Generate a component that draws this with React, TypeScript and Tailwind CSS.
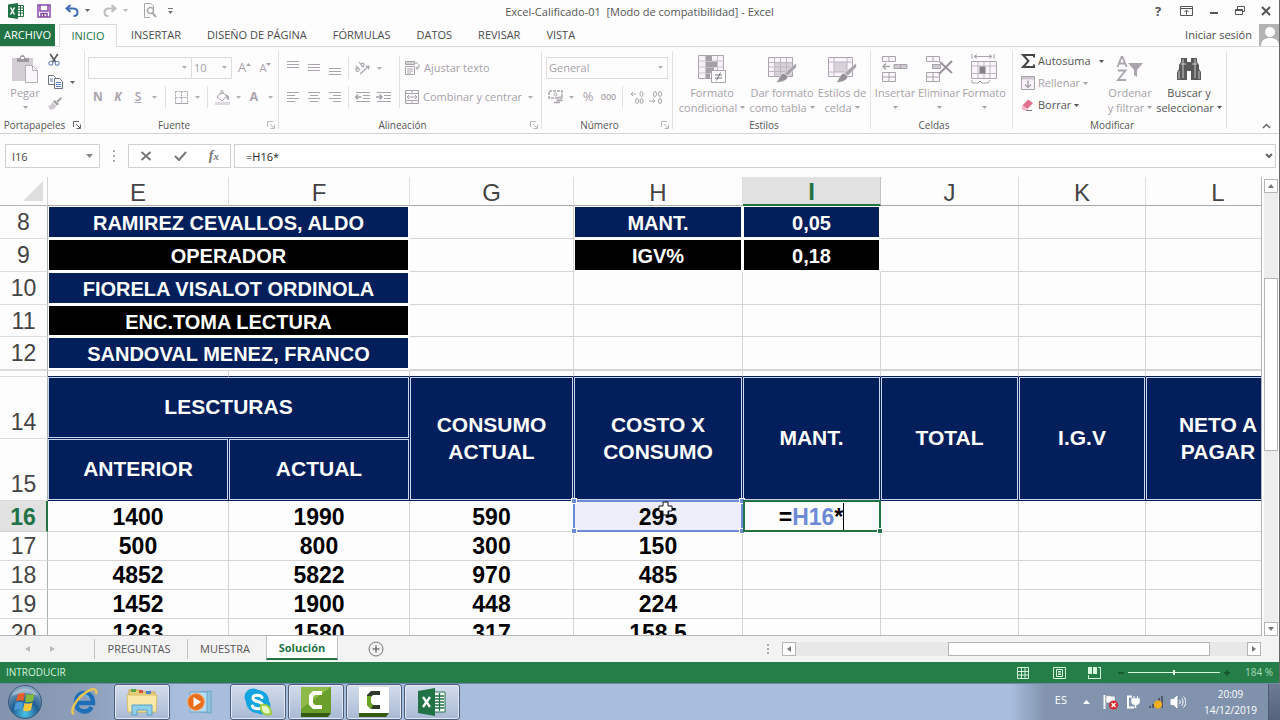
import React from "react";
import clsx from "clsx";

type IconProps = { className?: string };

const GRAY = "#a9a4ab";
const FILL = "#eae4ec";

const TABS = ["INSERTAR", "DISEÑO DE PÁGINA", "FÓRMULAS", "DATOS", "REVISAR", "VISTA"];

const COLUMNS = [
  { id: "E", width: "w-[181px]" },
  { id: "F", width: "w-[181px]" },
  { id: "G", width: "w-[164px]" },
  { id: "H", width: "w-[169px]" },
  { id: "I", width: "w-[138px]" },
  { id: "J", width: "w-[138px]" },
  { id: "K", width: "w-[127px]" },
  { id: "L", width: "w-[145px]" },
];

const STAFF_ROWS = [
  { n: 8, h: "h-[33px]", name: "RAMIREZ CEVALLOS, ALDO", dark: false, label: "MANT.", value: "0,05" },
  { n: 9, h: "h-[33px]", name: "OPERADOR", dark: true, label: "IGV%", value: "0,18" },
  { n: 10, h: "h-[33px]", name: "FIORELA VISALOT ORDINOLA", dark: false },
  { n: 11, h: "h-[32px]", name: "ENC.TOMA LECTURA", dark: true },
  { n: 12, h: "h-[33px]", name: "SANDOVAL MENEZ, FRANCO", dark: false },
];

const READINGS = [
  { n: 17, values: ["500", "800", "300", "150"] },
  { n: 18, values: ["4852", "5822", "970", "485"] },
  { n: 19, values: ["1452", "1900", "448", "224"] },
  { n: 20, values: ["1263", "1580", "317", "158,5"] },
];

/* ---------- small shared pieces ---------- */

function Caret({ className }: IconProps) {
  return (
    <svg viewBox="0 0 5 3" className={clsx("h-[3px] w-[5px] shrink-0 fill-current", className)}>
      <path d="M0 0h5L2.5 3z" />
    </svg>
  );
}

function CaretButton({ label, className }: { label: string; className?: string }) {
  return (
    <button aria-label={label} className={clsx("flex h-[22px] w-3 items-center justify-center text-[#b5b0b7]", className)}>
      <Caret />
    </button>
  );
}

function Tool({ label, className, children }: { label: string; className?: string; children: React.ReactNode }) {
  return (
    <button aria-label={label} className={clsx("flex h-[22px] shrink-0 items-center justify-center text-[#a9a4ab]", className)}>
      {children}
    </button>
  );
}

function Divider({ className }: IconProps) {
  return <div className={clsx("w-px shrink-0 bg-[#e0e0e0]", className)} />;
}

function Group({ title, className, launcher, active, children }: {
  title: string;
  className: string;
  launcher?: boolean;
  active?: boolean;
  children: React.ReactNode;
}) {
  return (
    <section className={clsx("relative flex shrink-0 flex-col", className)}>
      <div className="flex flex-1">{children}</div>
      <h2 className="flex h-4 items-center justify-center pr-4 text-[10px] text-[#555]">{title}</h2>
      {launcher && (
        <button aria-label={`Opciones de ${title}`} className={clsx("absolute right-1 bottom-1", active ? "text-[#666]" : "text-[#b9b9b9]")}>
          <svg viewBox="0 0 8 8" className="h-2 w-2" fill="none" stroke="currentColor">
            <path d="M.5 6V.5H6M3 3l4 4M7.5 3.5v4h-4" />
          </svg>
        </button>
      )}
      <div className="absolute top-1 right-0 bottom-1 w-px bg-[#e1e1e1]" />
    </section>
  );
}

function BigButton({ lines, icon, className, caretBelow, active }: {
  lines: string[];
  icon: React.ReactNode;
  className: string;
  caretBelow?: boolean;
  active?: boolean;
}) {
  return (
    <button className={clsx("flex flex-col items-center pt-[6px] text-[11px] leading-[15px] whitespace-nowrap", active ? "text-[#555]" : "text-[#a5a1a7]", className)}>
      <span className="flex h-8 items-center justify-center">{icon}</span>
      <span>{lines[0]}</span>
      {lines[1] && (
        <span className="flex items-center gap-[3px]">
          {lines[1]}
          <Caret />
        </span>
      )}
      {caretBelow && <Caret className="mt-[6px]" />}
    </button>
  );
}

function Combo({ label, value, className }: { label: string; value: string; className: string }) {
  return (
    <div className={clsx("relative h-[22px] border border-[#dcdcdc]", className)}>
      <select aria-label={label} defaultValue={value} className="block h-full w-full appearance-none bg-transparent pl-[2px] text-[11px] leading-[20px] text-[#a5a1a7] outline-none">
        <option>{value}</option>
      </select>
      <Caret className="pointer-events-none absolute top-2 right-1 text-[#b5b0b7]" />
    </div>
  );
}

/* ---------- ribbon icons ---------- */

function Lines({ rows, className }: { rows: [number, number, number][]; className?: string }) {
  return (
    <svg viewBox="0 0 14 16" className={clsx("h-4 w-[14px]", className)} stroke={GRAY} fill="none">
      {rows.map(([y, x1, x2]) => (
        <path key={y} d={`M${x1} ${y}H${x2}`} />
      ))}
    </svg>
  );
}

function ExcelMini() {
  return (
    <svg viewBox="0 0 16 16" className="h-4 w-4">
      <path d="M9 2.500h6.500v11H9z" fill="#fff" stroke="#217346" />
      <path d="M10 5h5M10 7.500h5M10 10h5M12.500 3v10" stroke="#217346" />
      <path d="M0 1.500L10 0v16L0 14.500z" fill="#217346" />
      <path d="M2.500 4.500l4 7M6.500 4.500l-4 7" stroke="#fff" strokeWidth="1.500" />
    </svg>
  );
}

function SaveIcon() {
  return (
    <svg viewBox="0 0 14 14" className="h-[14px] w-[14px]" fill="none" stroke="#8648a8" strokeWidth="1.500">
      <path d="M1 1h12v12H1zM3 1v6h8V1M4 13V9.500h6V13" />
      <path d="M6 10h1.500v3H6z" fill="#8648a8" stroke="none" />
    </svg>
  );
}

function UndoIcon({ flip, color }: { flip?: boolean; color: string }) {
  return (
    <svg viewBox="0 0 14 13" className={clsx("h-[13px] w-[14px]", flip && "-scale-x-100")} fill="none" stroke={color} strokeWidth="2">
      <path d="M5.500 1L1.500 4.500l4 3.500M2 4.500h6c3 0 4.500 1.500 4.500 4 0 2-1.500 3.500-4 3.500" />
    </svg>
  );
}

function PreviewIcon() {
  return (
    <svg viewBox="0 0 14 15" className="h-[15px] w-[14px]" fill="none" stroke="#aaa">
      <path d="M10.500 5V3L8 .5H1.500v14H7" />
      <circle cx="7.500" cy="7.500" r="3" strokeWidth="1.500" />
      <path d="M9.500 10l3.500 4" strokeWidth="2" />
    </svg>
  );
}

function PasteIcon() {
  return (
    <svg viewBox="0 0 28 30" className="h-[30px] w-7">
      <path d="M1 4h21v23H1z" fill="#d2ced3" />
      <path d="M6 4h3c0-4 5-4 5 0h4v4H6z" fill="#9c989e" />
      <path d="M10 3h3v2h-3z" fill="#fff" />
      <path d="M14.500 11.500h7l5 5v12h-12z" fill="#faf6fb" stroke="#b4b0b6" />
      <path d="M21.500 11.500v5h5" fill="none" stroke="#b4b0b6" />
    </svg>
  );
}

function CutIcon() {
  return (
    <svg viewBox="0 0 14 14" className="h-[14px] w-[14px]" fill="none">
      <path d="M2.500 0L9 9.500M11.500 0L5 9.500" stroke="#5c5c5c" strokeWidth="2" />
      <circle cx="3.300" cy="10.800" r="2.300" stroke="#6d84bd" strokeWidth="1.300" />
      <circle cx="10.700" cy="10.800" r="2.300" stroke="#6d84bd" strokeWidth="1.300" />
    </svg>
  );
}

function CopyIcon() {
  return (
    <svg viewBox="0 0 15 14" className="h-[14px] w-[15px]" fill="#fff" stroke="#6a7080">
      <path d="M.5.5h5l2 2v7h-7z" />
      <path d="M2 4h3M2 6h3" stroke="#5b7ab8" />
      <path d="M6.500 3.500h5l3 3v7h-8z" />
      <path d="M8 7.500h5M8 9.500h5M8 11.500h5" stroke="#5b7ab8" />
    </svg>
  );
}

function BrushIcon() {
  return (
    <svg viewBox="0 0 14 13" className="h-[13px] w-[14px]">
      <path d="M13 0l1 1.500-4 4L8.500 4z" fill="#a29ea4" />
      <path d="M7 3l4 4-2 1.500L5 4.500z" fill="#a29ea4" />
      <path d="M4.500 5l4 4c-2 3-5 4-6 4L0 9c2 0 3.500-2 4.500-4z" fill="#cdc9cf" />
    </svg>
  );
}

function BordersIcon() {
  return (
    <svg viewBox="0 0 13 13" className="h-[13px] w-[13px]" fill="none" stroke={GRAY}>
      <path d="M.5.5h12v12M.5.5v12M6.500.5v12M.5 6.500h12" strokeDasharray="2 1" />
      <path d="M0 12.500h13" />
    </svg>
  );
}

function BucketIcon() {
  return (
    <svg viewBox="0 0 15 15" className="h-[15px] w-[15px]" fill="none" stroke={GRAY}>
      <path d="M6.500 2L2 7l5 4 5-5zM6 5V1.500c0-1.500 2-1.500 2 0V4" />
      <path d="M11 5c2 0 3 2 2.500 5-1-1-1.500-2-2.500-5z" fill={GRAY} />
      <path d="M0 12h15v3H0z" fill="#ddd9de" stroke="none" />
    </svg>
  );
}

function OrientIcon() {
  return (
    <svg viewBox="0 0 16 14" className="h-[14px] w-4" fill="none" stroke={GRAY} strokeWidth="1.200">
      <path d="M5 13L14 5M14 5l-3.500.5M14 5l-.5 3.500" />
      <path d="M1 5l4 4M3.500 7.500c-2-1-3 0-2.500 1.500s2 2 3 .5" />
      <path d="M4 1l4 5M6 3.500c1-2 3-1.500 3 0s-1 2.500-2.500 2" />
    </svg>
  );
}

function WrapIcon() {
  return (
    <svg viewBox="0 0 15 14" className="h-[14px] w-[15px]" fill="none" stroke={GRAY}>
      <path d="M.5.5h9v3h-9zM0 2h13M.5 5.500h9v8h-9z" />
      <path d="M2 8h6M2 10h6M2 12h4M14 3v3.500l-3 1M12.500 5.500L11 7.500l2 1" />
    </svg>
  );
}

function MergeIcon() {
  return (
    <svg viewBox="0 0 14 14" className="h-[14px] w-[14px]" fill="none" stroke={GRAY}>
      <path d="M.5.5h13v13H.5zM.5 3.500h13M.5 10.500h13M7 0v3.500M7 10.500V14M2 7h10M4 5L2 7l2 2M10 5l2 2-2 2" />
    </svg>
  );
}

function IndentIcon({ right }: { right?: boolean }) {
  return (
    <svg viewBox="0 0 15 12" className="h-3 w-[15px]" fill="none" stroke={GRAY}>
      <path d="M1 1.500h14M8 4.500h7M8 7.500h7M1 10.500h14" />
      <path d={right ? "M0 6h6M3.500 3.500L6 6 3.500 8.500" : "M.5 6h6M3 3.500L.5 6 3 8.500"} strokeWidth="1.500" />
    </svg>
  );
}

function MoneyIcon() {
  return (
    <svg viewBox="0 0 16 14" className="h-[14px] w-4" fill="none" stroke={GRAY}>
      <path d="M1 1h13v7H1z" strokeDasharray="3 1" strokeWidth="1.500" />
      <circle cx="7.500" cy="4.500" r="1.500" />
      <ellipse cx="11.500" cy="8" rx="3" ry="1" fill={FILL} />
      <path d="M8.500 10.500h6M6 12.500h6" strokeWidth="1.500" />
    </svg>
  );
}

function DecimalIcon({ more }: { more?: boolean }) {
  return (
    <svg viewBox="0 0 14 13" className="h-[13px] w-[14px]" fill="none" stroke={GRAY}>
      {more ? (
        <>
          <path d="M1 3h5M3 1L1 3l2 2" />
          <ellipse cx="11.500" cy="3" rx="1.500" ry="2.500" />
          <ellipse cx="7" cy="10" rx="1.500" ry="2.500" />
          <ellipse cx="11.500" cy="10" rx="1.500" ry="2.500" />
        </>
      ) : (
        <>
          <ellipse cx="6" cy="3" rx="1.500" ry="2.500" />
          <ellipse cx="11" cy="3" rx="1.500" ry="2.500" />
          <path d="M0 10h6M4 8l2 2-2 2" />
          <ellipse cx="11" cy="10" rx="1.500" ry="2.500" />
        </>
      )}
    </svg>
  );
}

function CondFormatIcon() {
  return (
    <svg viewBox="0 0 28 28" className="h-7 w-7" stroke={GRAY}>
      <path d="M.5.5h25v23H.5z" fill="#f7f1f8" />
      <path d="M.5 6h25M.5 12h25M.5 18h25M7.500.5v23M19.500.5v23" fill="none" stroke="#c9c3cb" />
      <path d="M8 1h6v5H8zM8 6.500h11V12H8zM8 12.500h8V18H8zM8 18.500h4V24H8z" fill="#a59fa7" stroke="none" />
      <path d="M13.500 15.500h14v12h-14z" fill="#fff" />
      <path d="M17 20h7M17 23h7M22.500 17.500l-4 8" stroke="#77727a" />
    </svg>
  );
}

function TableFormatIcon({ cell }: { cell?: boolean }) {
  return (
    <svg viewBox="0 0 29 28" className="h-7 w-[29px]" stroke={GRAY}>
      <path d="M.5 2.500h24v19H.5z" fill="#faf5fb" />
      {cell ? <path d="M6 7h13v10H6z" fill="#d8d0da" stroke="none" /> : <path d="M7 8h17v13H7z" fill="#d8d0da" stroke="none" />}
      <path d={cell ? "M.5 7h24M.5 17h24M6 2.500v19M19 2.500v19" : "M.5 7.500h24M.5 12h24M.5 16.500h24M6.500 2.500v19M12.500 2.500v19M18.500 2.500v19"} fill="none" stroke="#bdb6bf" />
      <path d="M28 8l.5 4-9 9-3-3z" fill="#a8a3aa" stroke="#fff" strokeWidth=".500" />
      <path d="M16 18l4 3.500c-1 4-5 5.500-12 6 3-2 3-8 8-9.500z" fill="#979299" stroke="#fff" strokeWidth=".500" />
    </svg>
  );
}

function InsertIcon({ remove }: { remove?: boolean }) {
  return (
    <svg viewBox="0 0 28 28" className="h-7 w-7" fill="#faf6fb" stroke={GRAY}>
      <path d="M1.500 1.500h13v5h-13zM8 1.500v5" />
      <path d="M1.500 17.500h13v9h-13zM8 17.500v9M1.500 22h13" />
      {remove ? (
        <>
          <path d="M7.500 9.500h8v4h-8z" fill="#cfc9d1" />
          <path d="M15 7l12 11M27 6L14 19" strokeWidth="2" stroke="#99949b" />
        </>
      ) : (
        <>
          <path d="M13 9.500h13v4H13zM19.500 9.500v4" fill="#cfc9d1" />
          <path d="M2 11.500h7M5 8.500l-3 3 3 3" fill="none" strokeWidth="1.500" />
        </>
      )}
    </svg>
  );
}

function FormatCellsIcon() {
  return (
    <svg viewBox="0 0 28 30" className="h-[30px] w-7" fill="none" stroke={GRAY}>
      <path d="M2 0v5M24 0v5M4 2.500h18M7 .5l-3 2 3 2M19 .5l3 2-3 2" />
      <path d="M1.500 7.500h25v17h-25z" fill="#faf6fb" />
      <path d="M1.500 12h25M1.500 19.500h25M8 7.500v17M20 7.500v17M14 7.500v5M14 19v5" stroke="#bdb6bf" />
      <path d="M9.500 12.500h6v7h-6z" fill="#857f88" stroke="none" />
      <path d="M2 26v3h6l2-2 2 2h6l2-3" />
    </svg>
  );
}

function SortIcon() {
  return (
    <svg viewBox="0 0 28 28" className="h-7 w-7" fill="none" stroke={GRAY} strokeWidth="1.800">
      <path d="M1.500 12L5.500 2h1l4 10M3 8.500h6M2 15.500h7.500L2 25h8" />
      <path d="M12 8h15l-6 7v7l-3-2v-5z" fill={GRAY} stroke="none" />
    </svg>
  );
}

function BinocularsIcon() {
  return (
    <svg viewBox="0 0 26 26" className="h-[26px] w-[26px]">
      <path d="M5 2h6v4h4V2h6v4l2 3v4l2 3v8H15v-9h-4v9H1v-8l2-3V9l2-3z" fill="#595959" />
      <path d="M3 15v8M7 3v19M19 3v19M23 15v8M5 8h5M16 8h5" stroke="#e8e8e8" strokeWidth=".800" />
    </svg>
  );
}

function SigmaIcon() {
  return (
    <svg viewBox="0 0 14 14" className="h-[14px] w-[14px]" fill="none" stroke="#454545" strokeWidth="2">
      <path d="M13 3.500V1H2l5.500 6L2 13h11v-2.500" />
    </svg>
  );
}

function FillDownIcon() {
  return (
    <svg viewBox="0 0 14 14" className="h-[14px] w-[14px]" fill="none" stroke={GRAY}>
      <path d="M.5.5h13v13H.5z" fill="#f7f1f8" />
      <path d="M1 1h12v2.500H1z" fill="#cfc9d1" stroke="none" />
      <path d="M7 4.500v7M4 8.500l3 3 3-3" strokeWidth="1.500" />
    </svg>
  );
}

function EraserIcon() {
  return (
    <svg viewBox="0 0 14 12" className="h-3 w-[14px]">
      <path d="M7 .5L12 4 6.500 10 1.500 6.500z" fill="#e0708f" />
      <path d="M1.500 6.500l5 3.500-1 1.500H2L.5 9z" fill="#f3b9c8" />
      <path d="M5 11.500h6" stroke="#777" />
    </svg>
  );
}

/* ---------- window chrome ---------- */

function TitleBar() {
  return (
    <header className="relative flex h-6 shrink-0 items-center justify-between">
      <div className="flex items-center pb-[3px] pl-2 text-[#666]">
        <ExcelMini />
        <button aria-label="Guardar" className="ml-[13px]"><SaveIcon /></button>
        <button aria-label="Deshacer" className="ml-[14px]"><UndoIcon color="#3f6fb5" /></button>
        <Caret className="ml-[6px]" />
        <button aria-label="Rehacer" className="ml-[13px]"><UndoIcon flip color="#bdbdbd" /></button>
        <Caret className="ml-[6px] text-[#bbb]" />
        <button aria-label="Vista previa" className="ml-[15px]"><PreviewIcon /></button>
        <button aria-label="Personalizar barra" className="ml-[11px]">
          <svg viewBox="0 0 5 6" className="h-[6px] w-[5px]" fill="#777"><path d="M0 0h5v1H0zM0 3h5L2.500 6z" /></svg>
        </button>
      </div>
      <h1 className="pointer-events-none absolute inset-0 flex items-center justify-center text-[11px] whitespace-pre text-[#555]">
        Excel-Calificado-01  [Modo de compatibilidad] - Excel
      </h1>
      <div className="relative flex items-center gap-4 pr-2 pb-[3px] text-[#555]">
        <button aria-label="Ayuda" className="w-3 text-[13px] leading-4 font-bold">?</button>
        <button aria-label="Opciones de cinta">
          <svg viewBox="0 0 13 10" className="h-[10px] w-[13px]" fill="none" stroke="currentColor"><path d="M.5.5h12v9H.5zM.5 2.500h12M6.500 8.500V4.500M4.500 6l2-2 2 2" /></svg>
        </button>
        <button aria-label="Minimizar">
          <svg viewBox="0 0 10 10" className="h-[10px] w-[10px]" stroke="currentColor" strokeWidth="2"><path d="M1 7h8" /></svg>
        </button>
        <button aria-label="Restaurar">
          <svg viewBox="0 0 10 9" className="h-[9px] w-[10px]" fill="none" stroke="currentColor"><path d="M.5 3.500h7v5h-7zM2.500 3V.5h7v5H8M.5 4.500h7" /></svg>
        </button>
        <button aria-label="Cerrar">
          <svg viewBox="0 0 10 10" className="h-[10px] w-[10px]" stroke="currentColor" strokeWidth="2"><path d="M1 1l8 8M9 1L1 9" /></svg>
        </button>
      </div>
    </header>
  );
}

function TabStrip() {
  return (
    <nav className="flex h-[23px] shrink-0 items-stretch border-b border-[#d9d9d9] text-[11px] text-[#4b4b4b]">
      <button className="w-[55px] bg-[#217346] text-white">ARCHIVO</button>
      <button className="-mb-px ml-1 w-[58px] border border-b-0 border-[#d9d9d9] bg-[#fdfdfd] text-[#217346]">INICIO</button>
      <div className="ml-[14px] flex gap-[26px]">
        {TABS.map((tab) => (
          <button key={tab}>{tab}</button>
        ))}
      </div>
      <button className="ml-auto pr-[7px]">Iniciar sesión</button>
      <svg viewBox="0 0 20 22" className="h-[22px] w-5" aria-label="Cuenta">
        <path d="M0 0h20v22H0z" fill="#b3b3b3" />
        <circle cx="11" cy="8" r="5" fill="#fff" />
        <path d="M2 22c0-6 4-8 9-8s9 2 9 8z" fill="#fff" />
      </svg>
    </nav>
  );
}

function Ribbon() {
  return (
    <div className="relative flex h-[87px] shrink-0 border-b border-[#d5d5d5]">
      <Group title="Portapapeles" className="w-[85px]" launcher active>
        <BigButton lines={["Pegar"]} icon={<PasteIcon />} className="ml-[2px] w-[46px]" caretBelow />
        <div className="flex flex-col pt-[6px]">
          <button aria-label="Cortar" className="flex h-[14px] w-3"><CutIcon /></button>
          <div className="mt-2 flex items-center gap-[7px] text-[#666]">
            <button aria-label="Copiar"><CopyIcon /></button>
            <Caret />
          </div>
          <button aria-label="Copiar formato" className="mt-2"><BrushIcon /></button>
        </div>
      </Group>

      <Group title="Fuente" className="w-[194px]" launcher>
        <div className="flex flex-col gap-[7px] pt-[10px] pl-[3px]">
          <div className="flex">
            <Combo label="Fuente" value="" className="w-[104px]" />
            <Combo label="Tamaño" value="10" className="w-10 border-l-0" />
            <Tool label="Aumentar tamaño" className="ml-[2px] w-[21px] text-[13px]">
              A<Caret className="-mt-2 rotate-180" />
            </Tool>
            <Tool label="Reducir tamaño" className="w-[21px] text-[11px]">
              A<Caret className="-mt-2" />
            </Tool>
          </div>
          <div className="flex text-[12px]">
            <Tool label="Negrita" className="w-5 font-bold">N</Tool>
            <Tool label="Cursiva" className="w-5 font-bold italic">K</Tool>
            <Tool label="Subrayado" className="w-5 font-semibold underline">S</Tool>
            <CaretButton label="Más subrayados" />
            <Divider className="mx-[5px]" />
            <Tool label="Bordes" className="w-5"><BordersIcon /></Tool>
            <CaretButton label="Más bordes" />
            <Divider className="mx-[4px]" />
            <Tool label="Relleno" className="w-5"><BucketIcon /></Tool>
            <CaretButton label="Más rellenos" />
            <Tool label="Color de fuente" className="w-5 font-bold">A</Tool>
            <CaretButton label="Más colores" />
          </div>
        </div>
      </Group>

      <Group title="Alineación" className="w-[263px]" launcher>
        <div className="flex flex-col gap-[7px] pt-[10px] pl-[3px]">
          <div className="flex">
            <Tool label="Alinear arriba" className="w-[21px]"><Lines rows={[[1.5, 1, 13], [4.5, 1, 13], [7.5, 1, 13]]} /></Tool>
            <Tool label="Alinear al medio" className="w-[21px]"><Lines rows={[[4.5, 1, 13], [7.5, 1, 13], [10.5, 1, 13]]} /></Tool>
            <Tool label="Alinear abajo" className="w-[21px]"><Lines rows={[[8.5, 1, 13], [11.5, 1, 13], [14.5, 1, 13]]} /></Tool>
            <Divider className="mx-[3px]" />
            <Tool label="Orientación" className="w-[21px]"><OrientIcon /></Tool>
            <CaretButton label="Más orientaciones" />
          </div>
          <div className="flex">
            <Tool label="Alinear a la izquierda" className="w-[21px]"><Lines rows={[[3.5, 1, 13], [6.5, 1, 9], [9.5, 1, 13], [12.5, 1, 9]]} /></Tool>
            <Tool label="Centrar" className="w-[21px]"><Lines rows={[[3.5, 1, 13], [6.5, 3, 11], [9.5, 1, 13], [12.5, 3, 11]]} /></Tool>
            <Tool label="Alinear a la derecha" className="w-[21px]"><Lines rows={[[3.5, 1, 13], [6.5, 5, 13], [9.5, 1, 13], [12.5, 5, 13]]} /></Tool>
            <Divider className="mx-[3px]" />
            <Tool label="Disminuir sangría" className="w-[21px]"><IndentIcon /></Tool>
            <Tool label="Aumentar sangría" className="w-[21px]"><IndentIcon right /></Tool>
          </div>
        </div>
        <Divider className="mx-[5px] mt-[9px] mb-[9px]" />
        <div className="flex flex-col gap-[7px] pt-[10px] text-[11px]">
          <button className="flex h-[22px] items-center gap-1 whitespace-nowrap text-[#a5a1a7]"><WrapIcon />Ajustar texto</button>
          <div className="flex">
            <button className="flex h-[22px] w-[119px] items-center gap-1 whitespace-nowrap text-[#a5a1a7]"><MergeIcon />Combinar y centrar</button>
            <CaretButton label="Más combinaciones" />
          </div>
        </div>
      </Group>

      <Group title="Número" className="w-[131px]" launcher>
        <div className="flex flex-col gap-[7px] pt-[10px] pl-1">
          <Combo label="Formato de número" value="General" className="w-[122px]" />
          <div className="flex">
            <Tool label="Moneda" className="w-[19px]"><MoneyIcon /></Tool>
            <CaretButton label="Más monedas" />
            <Tool label="Porcentaje" className="w-[22px] text-[13px]">%</Tool>
            <Tool label="Millares" className="w-[19px] text-[9px] font-semibold">000</Tool>
            <Divider className="mx-[4px]" />
            <Tool label="Aumentar decimales" className="w-[19px]"><DecimalIcon more /></Tool>
            <Tool label="Disminuir decimales" className="w-[19px]"><DecimalIcon /></Tool>
          </div>
        </div>
      </Group>

      <Group title="Estilos" className="w-[198px]">
        <BigButton lines={["Formato", "condicional"]} icon={<CondFormatIcon />} className="ml-[2px] w-[74px]" />
        <BigButton lines={["Dar formato", "como tabla"]} icon={<TableFormatIcon />} className="w-[66px]" />
        <BigButton lines={["Estilos de", "celda"]} icon={<TableFormatIcon cell />} className="w-[54px]" />
      </Group>

      <Group title="Celdas" className="w-[142px]">
        <BigButton lines={["Insertar"]} icon={<InsertIcon />} className="ml-[2px] w-11" caretBelow />
        <BigButton lines={["Eliminar"]} icon={<InsertIcon remove />} className="w-11" caretBelow />
        <BigButton lines={["Formato"]} icon={<FormatCellsIcon />} className="w-[46px]" caretBelow />
      </Group>

      <Group title="Modificar" className="w-[214px]">
        <div className="flex w-[91px] flex-col pt-[3px] pl-2 text-[11px] text-[#555]">
          <div className="flex h-[22px] items-center gap-[3px] whitespace-nowrap">
            <button className="flex items-center gap-[3px]"><SigmaIcon />Autosuma</button>
            <Caret className="ml-auto" />
          </div>
          <button className="flex h-[22px] items-center gap-[3px] text-[#a5a1a7]"><FillDownIcon />Rellenar<Caret /></button>
          <button className="flex h-[22px] items-center gap-[3px]"><EraserIcon />Borrar<Caret /></button>
        </div>
        <BigButton lines={["Ordenar", "y filtrar"]} icon={<SortIcon />} className="w-[52px]" />
        <BigButton lines={["Buscar y", "seleccionar"]} icon={<BinocularsIcon />} className="w-[66px]" active />
      </Group>

      <button aria-label="Contraer la cinta" className="absolute right-2 bottom-1 text-[#666]">
        <svg viewBox="0 0 9 6" className="h-[6px] w-[9px]" fill="none" stroke="currentColor" strokeWidth="1.500"><path d="M1 5l3.500-3.500L8 5" /></svg>
      </button>
    </div>
  );
}

function FormulaBar() {
  return (
    <div className="mb-[9px] flex h-[34px] shrink-0 items-end pr-[3px] pl-[5px] text-[11px] text-[#444]">
      <div className="relative h-6 w-[95px] border border-[#d0d0d0] bg-white">
        <input aria-label="Cuadro de nombres" defaultValue="I16" className="block h-full w-full pl-[6px] outline-none" />
        <svg viewBox="0 0 7 4" className="absolute top-[9px] right-[6px] h-1 w-[7px]" fill="#888"><path d="M0 0h7L3.500 4z" /></svg>
      </div>
      <svg viewBox="0 0 2 12" className="mx-[13px] mb-[6px] h-3 w-[2px]" fill="#aaa"><path d="M0 0h2v2H0zM0 5h2v2H0zM0 10h2v2H0z" /></svg>
      <div className="flex h-6 w-[103px] items-center justify-around border border-[#d0d0d0] bg-white">
        <button aria-label="Cancelar">
          <svg viewBox="0 0 12 10" className="h-[10px] w-3" fill="none" stroke="#777" strokeWidth="2"><path d="M1.500 1l9 8M10.500 1l-9 8" /></svg>
        </button>
        <button aria-label="Introducir">
          <svg viewBox="0 0 13 10" className="h-[10px] w-[13px]" fill="none" stroke="#777" strokeWidth="2"><path d="M1 5l4 4 7-8" /></svg>
        </button>
        <button aria-label="Insertar función" className="font-['Liberation_Serif'] text-[14px] leading-4 font-bold text-[#777] italic">
          f<span className="text-[11px]">x</span>
        </button>
      </div>
      <div className="relative ml-[3px] h-6 flex-1 border border-[#d0d0d0] bg-white">
        <input aria-label="Barra de fórmulas" defaultValue="=H16*" className="block h-full w-full pl-[11px] text-[#222] outline-none" />
        <svg viewBox="0 0 8 6" className="absolute top-2 right-[2px] h-[6px] w-2" fill="none" stroke="#666" strokeWidth="2"><path d="M1 1l3 3 3-3" /></svg>
      </div>
    </div>
  );
}

/* ---------- sheet ---------- */

const GRID = "border-r border-b border-[#d4d4d4]";
const HEAD = "border-r border-b border-[#021e5b] bg-[#021e5b] pb-[2px] text-white shadow-[inset_0_0_0_1px_#ccd5ec]";
const BAND = "border-t border-r-2 border-b-2 border-l border-white pt-[2px] text-white";

function RowHead({ n, tall }: { n: number; tall?: boolean }) {
  return (
    <th
      scope="row"
      className={clsx(
        "border-r border-b border-r-[#a9b3ae] border-b-[#dcdcdc] text-[23px] leading-7 font-normal text-[#444]",
        tall ? "pb-[2px] align-bottom" : "align-middle"
      )}
    >
      {n}
    </th>
  );
}

function Blank({ count }: { count: number }) {
  return Array.from({ length: count }, (_, i) => <td key={i} className={GRID} />);
}

function Sheet() {
  return (
    <div className="min-w-0 flex-1 overflow-hidden border-r border-b border-[#b5b5b5]">
      <table className="w-[1291px] table-fixed border-separate border-spacing-0 text-center font-['Liberation_Sans',sans-serif] text-[23px] leading-7 font-bold text-black">
        <colgroup>
          <col className="w-12" />
          {COLUMNS.map((c) => (
            <col key={c.id} className={c.width} />
          ))}
        </colgroup>
        <thead>
          <tr className="h-[29px]">
            <th className="border-r border-b border-r-[#d4d4d4] border-b-[#b5b5b5] align-bottom">
              <svg viewBox="0 0 20 20" className="mr-1 mb-1 ml-auto h-5 w-5" fill="#dedede" aria-label="Seleccionar todo"><path d="M20 0v20H0z" /></svg>
            </th>
            {COLUMNS.map((c) => (
              <th
                key={c.id}
                scope="col"
                className={clsx(
                  "pt-[2px] text-[24px]",
                  c.id === "I"
                    ? "border-r border-b-2 border-r-[#c4c4c4] border-b-[#217346] bg-[#e1e1e1] text-[#217346]"
                    : "border-r border-b border-r-[#dedede] border-b-[#a9a9a9] font-normal text-[#444]"
                )}
              >
                <span className="block leading-[25px]">{c.id}</span>
              </th>
            ))}
          </tr>
        </thead>
        <tbody>
          {STAFF_ROWS.map((r) => {
            const fill = r.dark ? "bg-black" : "bg-[#021e5b]";
            return (
              <tr key={r.n} className={clsx(r.h, "text-[20px] leading-[26px]")}>
                <RowHead n={r.n} />
                <td colSpan={2} className={clsx(BAND, fill)}>{r.name}</td>
                <Blank count={1} />
                {r.label ? (
                  <>
                    <td className={clsx(BAND, fill)}>{r.label}</td>
                    <td className={clsx(BAND, fill)}>{r.value}</td>
                  </>
                ) : (
                  <Blank count={2} />
                )}
                <Blank count={3} />
              </tr>
            );
          })}
          {/* row 13 is squeezed to a sliver */}
          <tr className="h-[7px]">
            <td className="border-t border-r border-b border-[#dcdcdc] border-r-[#a9b3ae]" />
            {COLUMNS.map((c) => (
              <td key={c.id} className="border-t border-r border-b border-[#d4d4d4] border-b-[#021e5b]" />
            ))}
          </tr>
          <tr className="h-[62px] text-[21px] leading-[27px]">
            <RowHead n={14} tall />
            <td colSpan={2} className={HEAD}>LESCTURAS</td>
            <td rowSpan={2} className={HEAD}>CONSUMO<br />ACTUAL</td>
            <td rowSpan={2} className={HEAD}>COSTO X<br />CONSUMO</td>
            <td rowSpan={2} className={HEAD}>MANT.</td>
            <td rowSpan={2} className={HEAD}>TOTAL</td>
            <td rowSpan={2} className={HEAD}>I.G.V</td>
            <td rowSpan={2} className={HEAD}>NETO A<br />PAGAR</td>
          </tr>
          <tr className="h-[62px] text-[21px]">
            <RowHead n={15} tall />
            <td className={HEAD}>ANTERIOR</td>
            <td className={HEAD}>ACTUAL</td>
          </tr>
          <tr className="h-[31px]">
            <th scope="row" className="border-r-2 border-b border-r-[#217346] border-b-[#cfcfcf] bg-[#e1e1e1] pt-[2px] text-[23px] leading-7 text-[#217346]">16</th>
            <td className={clsx(GRID, "pt-[2px]")}>1400</td>
            <td className={clsx(GRID, "pt-[2px]")}>1990</td>
            <td className={clsx(GRID, "pt-[2px]")}>590</td>
            <td className={clsx(GRID, "relative bg-[#eeeefb] pt-[2px]")}>
              295
              <div className="absolute -top-px -right-px -bottom-px -left-px border-2 border-[#6d8ad6]">
                <i className="absolute -top-1 -left-1 h-[6px] w-[6px] border border-white bg-[#6d8ad6]" />
                <i className="absolute -top-1 -right-1 h-[6px] w-[6px] border border-white bg-[#6d8ad6]" />
                <i className="absolute -bottom-1 -left-1 h-[6px] w-[6px] border border-white bg-[#6d8ad6]" />
                <i className="absolute -right-1 -bottom-1 h-[6px] w-[6px] border border-white bg-[#6d8ad6]" />
              </div>
              <svg viewBox="0 0 15 15" className="absolute top-0 left-[84px] h-[15px] w-[15px]" fill="#fff" stroke="#111">
                <path d="M5 1h5v4h4v5h-4v4H5v-4H1V5h4z" />
              </svg>
            </td>
            <td className={clsx(GRID, "relative pt-[2px]")}>
              <div className="flex items-center justify-center">
                =<span className="text-[#6d8ad6]">H16</span>*
                <span className="h-7 w-px bg-black" />
              </div>
              <div className="absolute -top-px -right-px -bottom-px left-0 border-2 border-[#217346]">
                <i className="absolute -right-1 -bottom-1 h-[6px] w-[6px] border border-white bg-[#217346]" />
              </div>
            </td>
            <Blank count={3} />
          </tr>
          {READINGS.map((r) => (
            <tr key={r.n} className="h-[29px]">
              <RowHead n={r.n} />
              {r.values.map((v, i) => (
                <td key={i} className={GRID}>{v}</td>
              ))}
              <Blank count={4} />
            </tr>
          ))}
        </tbody>
      </table>
    </div>
  );
}

function ArrowBox({ label, d, className }: { label: string; d: string; className?: string }) {
  return (
    <button aria-label={label} className={clsx("flex h-[14px] w-[14px] shrink-0 items-center justify-center border border-[#b5b5b5] bg-white", className)}>
      <svg viewBox="0 0 6 6" className="h-[6px] w-[6px]" fill="#777"><path d={d} /></svg>
    </button>
  );
}

function VerticalScroll() {
  return (
    <div className="flex w-[17px] shrink-0 flex-col items-center pt-[2px]">
      <ArrowBox label="Subir" d="M0 5h6L3 1z" />
      <div className="flex w-[14px] flex-1 flex-col bg-[#ededed]">
        <div className="flex-[20]" />
        <div className="flex-[40] border border-[#b5b5b5] bg-white" />
        <div className="flex-[40]" />
      </div>
      <ArrowBox label="Bajar" d="M0 1h6L3 5z" />
    </div>
  );
}

function SheetTabs() {
  return (
    <div className="flex h-[26px] shrink-0 items-center bg-[#f3f3f3] pr-[18px] text-[11px] text-[#555]">
      <div className="flex w-[94px] gap-5 pl-[25px]">
        <button aria-label="Hoja anterior"><svg viewBox="0 0 5 6" className="h-[6px] w-[5px]" fill="#bbb"><path d="M5 0v6L0 3z" /></svg></button>
        <button aria-label="Hoja siguiente"><svg viewBox="0 0 5 6" className="h-[6px] w-[5px]" fill="#bbb"><path d="M0 0v6l5-3z" /></svg></button>
      </div>
      <button className="h-5 w-[93px] border-l border-[#c2c2c2] pr-1">PREGUNTAS</button>
      <button className="h-5 w-[79px] border-l border-[#c2c2c2] pr-1">MUESTRA</button>
      <button className="mb-[2px] h-6 w-[72px] border-r border-b-2 border-l border-[#c2c2c2] border-b-[#217346] bg-white pt-[2px] font-bold text-[#217346]">Solución</button>
      <button aria-label="Hoja nueva" className="ml-[30px]">
        <svg viewBox="0 0 16 16" className="h-4 w-4" fill="none" stroke="#777"><circle cx="8" cy="8" r="7" /><path d="M8 4.500v7M4.500 8h7" strokeWidth="1.500" /></svg>
      </button>
      <div className="ml-auto flex w-[494px] items-center">
        <svg viewBox="0 0 2 10" className="mr-[13px] h-[10px] w-[2px]" fill="#aaa"><path d="M0 0h2v2H0zM0 4h2v2H0zM0 8h2v2H0z" /></svg>
        <ArrowBox label="Izquierda" d="M5 0v6L1 3z" />
        <div className="flex h-[14px] flex-1 bg-[#e8e8e8]">
          <div className="ml-auto w-[262px] border border-[#b5b5b5] bg-white" />
          <div className="w-[37px]" />
        </div>
        <ArrowBox label="Derecha" d="M1 0v6l4-3z" />
      </div>
    </div>
  );
}

function StatusBar() {
  return (
    <div className="flex h-[21px] shrink-0 items-center bg-[#257e48] px-[6px] text-[10px] text-[#d8f0df]">
      <span>INTRODUCIR</span>
      <div className="ml-auto flex items-center">
        <button aria-label="Normal">
          <svg viewBox="0 0 12 12" className="h-3 w-3" fill="none" stroke="#d5f5dc"><path d="M.5.5h11v11H.5zM4.500 0v12M8 0v12M0 4.500h12M0 8h12" /></svg>
        </button>
        <button aria-label="Diseño de página" className="ml-6">
          <svg viewBox="0 0 13 12" className="h-3 w-[13px]" fill="none" stroke="#d5f5dc"><path d="M.5.5h12v11H.5zM3.500 2.500h6v7h-6zM5 4.500h3M5 6h3M5 7.500h3" /></svg>
        </button>
        <button aria-label="Vista previa de salto" className="ml-[22px]">
          <svg viewBox="0 0 13 12" className="h-3 w-[13px]" fill="#d5f5dc"><path d="M0 0h4v7H0zM5 0h4v7H5zM10 0h3v12H0V8h1v3h11V1h-2z" /></svg>
        </button>
        <svg viewBox="0 0 6 6" className="ml-[17px] h-[6px] w-[6px]" stroke="#12502a"><path d="M0 3h6" strokeWidth="1.500" /></svg>
        <input type="range" aria-label="Zoom" defaultValue={50} className="mx-1 h-3 w-[92px] appearance-none bg-transparent [&::-webkit-slider-runnable-track]:h-px [&::-webkit-slider-runnable-track]:bg-[#d5f5dc] [&::-webkit-slider-thumb]:-mt-[2px] [&::-webkit-slider-thumb]:h-[5px] [&::-webkit-slider-thumb]:w-[2px] [&::-webkit-slider-thumb]:appearance-none [&::-webkit-slider-thumb]:bg-[#e8fbec]" />
        <svg viewBox="0 0 6 6" className="h-[6px] w-[6px]" stroke="#12502a"><path d="M0 3h6M3 0v6" strokeWidth="1.500" /></svg>
        <span className="ml-[15px] text-[#a9dcb8]">184 %</span>
      </div>
    </div>
  );
}

/* ---------- windows taskbar ---------- */

function StartOrb() {
  return (
    <svg viewBox="0 0 36 36" className="h-9 w-9">
      <defs>
        <radialGradient id="orb" cx="50%" cy="85%" r="80%">
          <stop offset="0" stopColor="#4fc3e8" />
          <stop offset=".5" stopColor="#1f5f93" />
          <stop offset="1" stopColor="#8ba7c0" />
        </radialGradient>
      </defs>
      <circle cx="18" cy="18" r="16.500" fill="url(#orb)" stroke="#3d5878" />
      <path d="M11 10c3-2 5-1.500 7-.5l-1.500 7.500c-2.500-1-5-1-7.500.5z" fill="#e2602c" />
      <path d="M19.500 10c2.500 1 5 1 8-.5L26 17c-3 1.500-5.500 1.500-8 .5z" fill="#86b93b" />
      <path d="M8.500 19c2.500-1.500 5-1.500 7.500-.5L14.500 26c-2.500-1-5-1-7.500.5z" fill="#4a9bd8" />
      <path d="M17.500 19c2.500 1 5 1 8-.5L24 26c-3 1.500-5.500 1.500-8 .5z" fill="#f4c63a" />
      <path d="M5 12c4-10 22-10 26 0-8-4-18-4-26 0z" fill="#fff" opacity=".350" />
    </svg>
  );
}

function IeIcon() {
  return (
    <svg viewBox="0 0 30 30" className="h-[30px] w-[30px]" fill="none">
      <path d="M22.500 20c-1.500 3-4 4.500-7 4.500-5 0-8.500-3.500-8.500-9S10.500 6 15.500 6s8.500 4 8.500 10H8" stroke="#1c6fb8" strokeWidth="4.500" />
      <path d="M20 11.500c-2-4.500-7.500-5-10-1.500" stroke="#6bbbe8" strokeWidth="1.500" />
      <path d="M5 27c-5-2 2-15 11-21C23 1 29 1 27 7" stroke="#e8c552" strokeWidth="2.500" />
    </svg>
  );
}

function FolderIcon() {
  return (
    <svg viewBox="0 0 32 30" className="h-[30px] w-8">
      <path d="M3 3h10l2 2h14v20H3z" fill="#e9cf7a" stroke="#c9a94f" />
      <path d="M5 2h5v3H5z" fill="#5aa545" />
      <path d="M13 3h4v3h-4z" fill="#d65338" />
      <path d="M20 4h5v3h-5z" fill="#4a84c4" />
      <path d="M1 8h30l-1 17H2z" fill="#f8e9a8" stroke="#d9bf6c" />
      <path d="M6 28V18h20v10h-5v-5H11v5z" fill="#8fd0ea" stroke="#5b9fc4" />
    </svg>
  );
}

function MediaIcon() {
  return (
    <svg viewBox="0 0 28 26" className="h-[26px] w-7">
      <path d="M14 3l11-1v22l-11-1z" fill="#8fc4e0" stroke="#6ba5c8" />
      <path d="M4 3h17v20H4z" fill="#b5ddf0" stroke="#6ba5c8" />
      <circle cx="10" cy="13" r="8.500" fill="#ea6d1c" stroke="#f5b07a" />
      <path d="M7.500 8l7.500 5-7.500 5z" fill="#fff" />
    </svg>
  );
}

function SkypeIcon() {
  return (
    <svg viewBox="0 0 30 30" className="h-[30px] w-[30px]">
      <circle cx="10" cy="10" r="8.500" fill="#12a5e0" />
      <circle cx="19" cy="19" r="8.500" fill="#12a5e0" />
      <circle cx="14.500" cy="14.500" r="11.500" fill="#12a5e0" />
      <path d="M19 10.500C18 7.500 10 7 10 11c0 4.500 9.500 2.500 9.500 7.500 0 4.500-9 4-10 .5" fill="none" stroke="#fff" strokeWidth="3" strokeLinecap="round" />
      <path d="M18 18c6-1 10 2 10 9-7 2-11-2-10-9z" fill="#e8f7c8" stroke="#9ccc3c" strokeWidth="2" />
    </svg>
  );
}

function CamtasiaIcon({ light }: { light?: boolean }) {
  return (
    <svg viewBox="0 0 30 30" className="h-[30px] w-[30px]">
      <path d="M0 0h30v26H0z" fill={light ? "#fff" : "#6b9f2c"} />
      {!light && <path d="M0 0h30L0 22z" fill="#8dba48" />}
      <path d="M0 26h30l-3 4H0z" fill="#35590f" />
      <path d="M21 4h-9L8 8v10l4 4h9v-4h-7l-2-2v-6l2-2h7z" fill={light ? "#2f3b28" : "#fff"} />
      {light && <path d="M8 9v9l4 4 2-4-2-2V9z" fill="#6aa524" />}
    </svg>
  );
}

function ExcelIcon() {
  return (
    <svg viewBox="0 0 30 28" className="h-7 w-[30px]">
      <path d="M16 4h12v20H16z" fill="#fff" stroke="#217346" />
      <path d="M18 8h9M18 11h9M18 14h9M18 17h9M18 20h9M22.500 5v18" stroke="#217346" strokeWidth="1.300" />
      <path d="M1 3l17-3v28L1 25z" fill="#217346" />
      <path d="M6 9l7 10M13 9L6 19" stroke="#fff" strokeWidth="2.300" />
    </svg>
  );
}

function TaskButton({ label, open, children }: { label: string; open?: boolean; children: React.ReactNode }) {
  return (
    <button
      aria-label={label}
      className={clsx(
        "flex h-full w-14 items-center justify-center",
        open && "rounded-[3px] border border-[#4a5d7c] bg-linear-to-b from-[#d3dcec] to-[#a9b9d4] shadow-[inset_0_0_0_1px_#e4eaf4]"
      )}
    >
      {children}
    </button>
  );
}

function Taskbar() {
  return (
    <footer className="flex h-[37px] shrink-0 items-stretch border-t border-[#7289ac] bg-[linear-gradient(90deg,#8393ad_0,#8d9fbb_90px,#a9bedd_180px,#a9bedd_calc(100%-270px),#8294ae_calc(100%-235px),#8092ab_100%)]">
      <button aria-label="Inicio" className="ml-[7px] flex w-[49px] items-center"><StartOrb /></button>
      <div className="flex gap-[2px]">
        <TaskButton label="Internet Explorer"><IeIcon /></TaskButton>
        <TaskButton label="Explorador" open><FolderIcon /></TaskButton>
        <TaskButton label="Reproductor"><MediaIcon /></TaskButton>
        <TaskButton label="Skype" open><SkypeIcon /></TaskButton>
        <TaskButton label="Camtasia" open><CamtasiaIcon /></TaskButton>
        <TaskButton label="Grabadora" open><CamtasiaIcon light /></TaskButton>
        <TaskButton label="Excel" open><ExcelIcon /></TaskButton>
      </div>
      <div className="ml-auto flex items-center text-[11px] text-white">
        <span className="mr-4 pb-1">ES</span>
        <svg viewBox="0 0 7 4" className="mr-[13px] h-1 w-[7px]" fill="#fff"><path d="M0 4h7L3.500 0z" /></svg>
        <svg viewBox="0 0 16 16" className="mr-[7px] h-4 w-4">
          <path d="M1.500 1v14" stroke="#fff" strokeWidth="2" />
          <path d="M3 2c4-1 5 1 9 0v7c-4 1-5-1-9 0z" fill="#fff" stroke="#777" strokeWidth=".500" />
          <circle cx="10.500" cy="11" r="4.500" fill="#d8262c" />
          <path d="M8.500 9l4 4M12.500 9l-4 4" stroke="#fff" strokeWidth="1.500" />
        </svg>
        <svg viewBox="0 0 14 16" className="mr-[8px] h-4 w-[14px]" fill="none" stroke="#fff">
          <path d="M6 2.500H2v11h6" strokeWidth="2" />
          <path d="M6 5h7v3c0 3-7 3-7 0zM9.500 10v4" fill="#fff" strokeWidth="1.500" />
          <path d="M8 2v3M11.500 2v3" />
        </svg>
        <svg viewBox="0 0 15 14" className="mr-[7px] h-[14px] w-[15px]">
          <path d="M1 11h2v2H1zM4 9h2v4H4zM7 6h2v7H7zM10 3h2v10h-2zM13 1h2v12h-2z" fill="#505a68" />
          <circle cx="10" cy="9.500" r="4" fill="#f2b01e" />
        </svg>
        <svg viewBox="0 0 16 14" className="mr-[17px] h-[14px] w-4" fill="none" stroke="#fff">
          <path d="M1 4.500h2.500L7 1v12L3.500 9.500H1z" fill="#fff" />
          <path d="M9.500 5c1 1 1 3 0 4M11.500 3c2 2 2 6 0 8M13.500 1.500c3 3 3 8 0 11" />
        </svg>
        <div className="w-[55px] text-center text-[10px] leading-4 whitespace-nowrap">
          <div>20:09</div>
          <div>14/12/2019</div>
        </div>
        <button aria-label="Mostrar escritorio" className="ml-[10px] h-full w-3 border-l border-[#4c5a70] bg-linear-to-b from-[#6d7c94] to-[#55637c]" />
      </div>
    </footer>
  );
}

export default function App() {
  return (
    <div className="flex h-screen w-full flex-col overflow-hidden bg-[#fdfdfd] font-['Open_Sans',sans-serif]">
      <div className="flex min-h-0 flex-1 flex-col border-r border-[#666]">
        <TitleBar />
        <TabStrip />
        <Ribbon />
        <FormulaBar />
        <main className="flex min-h-0 flex-1">
          <Sheet />
          <VerticalScroll />
        </main>
        <SheetTabs />
        <StatusBar />
      </div>
      <Taskbar />
    </div>
  );
}
